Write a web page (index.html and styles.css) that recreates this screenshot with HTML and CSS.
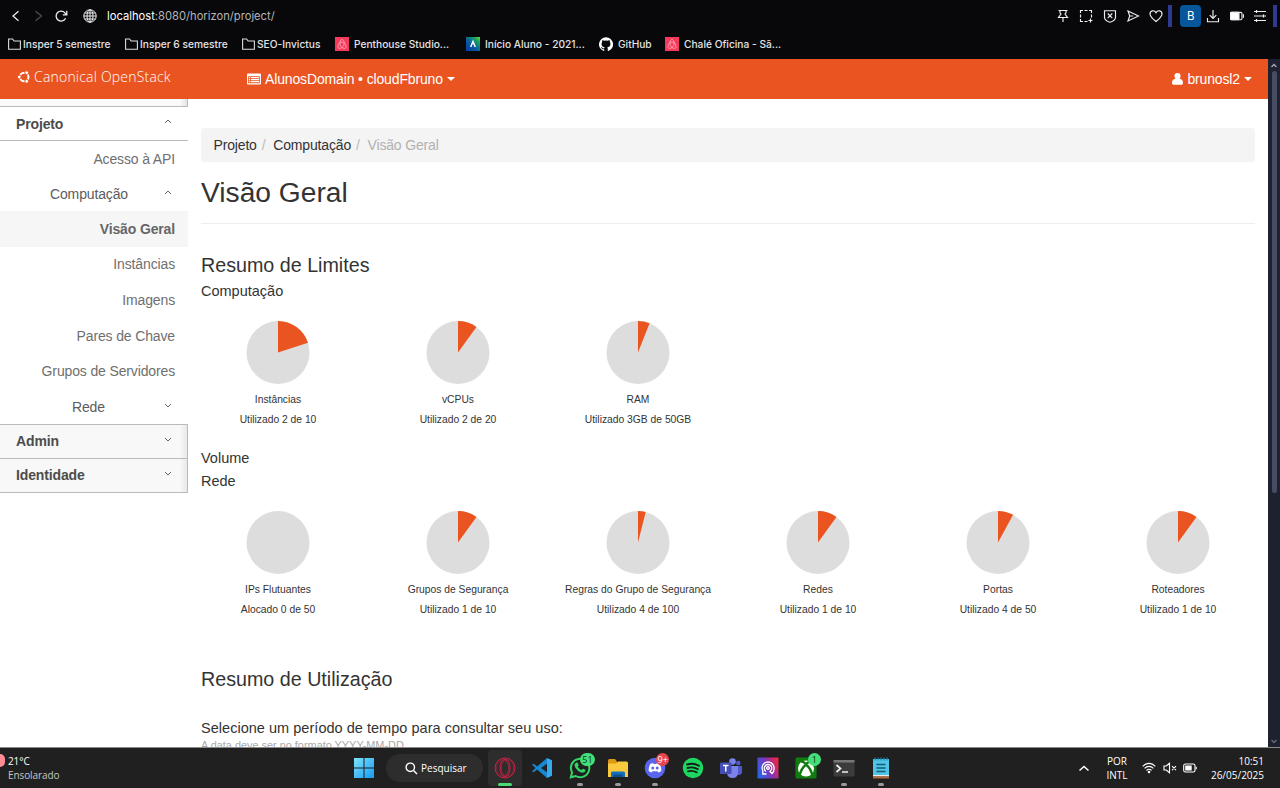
FILE: index.html
```html
<!DOCTYPE html>
<html lang="pt-BR">
<head>
<meta charset="utf-8">
<title>Visão Geral - Canonical OpenStack</title>
<link rel="stylesheet" href="styles.css">
</head>
<body>
<div class="screen">
  <header class="browser">
    <div class="toolbar">
      <svg class="nav-icon" viewBox="0 0 14 14"><path d="M9.500 2.200 4 7l5.500 4.800"/></svg>
      <svg class="nav-icon dim" viewBox="0 0 14 14"><path d="M4.500 2.200 10.500 7l-6 4.800"/></svg>
      <svg class="nav-icon reload" viewBox="0 0 14 14"><path d="M11.600 9.300A5 5 0 1 1 11.200 4.200L12.600 5.500M12.800 1.800v4H8.800"/></svg>
      <svg class="nav-icon globe" viewBox="0 0 14 14"><circle cx="7" cy="7" r="6.200"/><ellipse cx="7" cy="7" rx="3" ry="6.200"/><path d="M7 .8v12.400M.8 7h12.400M1.600 4h10.800M1.600 10h10.800"/></svg>
      <span class="url">localhost<span>:8080/horizon/project/</span></span>
      <div class="tools">
        <svg viewBox="0 0 14 14"><path d="M2.500 1.500h9M4 1.500v2.300L5 5 2.500 8.500h9L9 5l1-1.200V1.500M7 8.500V13"/></svg>
        <svg viewBox="0 0 14 14"><path d="M1.500 4V1.500H4M5.500 1.500h3M10 1.500h2.500V4M12.500 5.500v3M1.500 5.500v3M1.500 10v2.500H4M5.500 12.500h3M11.500 9.500v4M9.500 11.500h4"/></svg>
        <svg viewBox="0 0 14 14"><path d="M1.500 1.700h11v6.500c0 2.500-3 4.300-5.500 5-2.500-.7-5.500-2.500-5.500-5zM4.700 4.500l4.600 4.600M9.300 4.500 4.700 9.100"/></svg>
        <svg viewBox="0 0 14 14"><path d="M2 2l10.500 5L2 12l1.700-5zM3.700 7h3.500"/></svg>
        <svg viewBox="0 0 14 14"><path d="M7 12.500C4 10 1 7.700 1 4.900 1 1.400 5.400.7 7 3.700c1.600-3 6-2.300 6 1.200 0 2.800-3 5.100-6 7.600z"/></svg>
        <i class="mark"></i>
        <b class="profile">B</b>
        <svg viewBox="0 0 14 14"><path d="M7 1v8M3.700 6.200 7 9.500l3.300-3.300M1.500 9v3.700h11V9"/></svg>
        <svg viewBox="0 0 14 14"><rect x=".5" y="3.300" width="11.500" height="7.400" rx="1.500"/><rect x=".5" y="3.300" width="8.500" height="7.400" rx="1" fill="#fff"/><path d="M13.500 5.300v3.400"/></svg>
        <svg viewBox="0 0 14 14"><path d="M1 2.500h12M1 7h12M1 11.500h12M3.500 1v3M10.500 5.500v3M3.500 10v3"/></svg>
        <i class="mark end"></i>
      </div>
    </div>
    <nav class="bookmarks">
      <span class="bm f1"><svg class="folder" viewBox="0 0 13 12"><path d="M.6 1h4l1.500 2h6.300v8.200H.6z"/></svg><span>Insper 5 semestre</span></span>
      <span class="bm f2"><svg class="folder" viewBox="0 0 13 12"><path d="M.6 1h4l1.500 2h6.300v8.200H.6z"/></svg><span>Insper 6 semestre</span></span>
      <span class="bm f3"><svg class="folder" viewBox="0 0 13 12"><path d="M.6 1h4l1.500 2h6.300v8.200H.6z"/></svg><span>SEO-Invictus</span></span>
      <span class="bm s1"><svg class="site" viewBox="0 0 14 14"><path fill="#f53b5d" d="M0 0h14v14H0z"/><path class="bnb" d="M7 10.500C5.500 9 5 8 5 7a2 2 0 0 1 4 0c0 1-.5 2-2 3.500-1.300 1.200-4.300 1.500-4.100-1C3 8.700 5.200 4 6 2.900c.5-.7 1.500-.7 2 0C8.800 4 11 8.700 11.100 9.500c.2 2.500-2.800 2.200-4.100 1z"/></svg><span>Penthouse Studio...</span></span>
      <span class="bm s2"><svg class="site" viewBox="0 0 14 14"><defs><linearGradient id="ins" x1="1" y1="0" x2="0" y2="1"><stop offset="0" stop-color="#66dd33"/><stop offset=".25" stop-color="#159e65"/><stop offset=".6" stop-color="#0756a4"/><stop offset="1" stop-color="#083da0"/></linearGradient></defs><path fill="url(#ins)" d="M0 0h14v14H0z"/><path d="M4.700 10 7 4.500 9.300 10" fill="none" stroke="#fff" stroke-width="1.500"/></svg><span>Início Aluno - 2021...</span></span>
      <span class="bm s3"><svg class="site" viewBox="0 0 16 16"><path fill="#fff" d="M8 .3a8 8 0 0 0-2.500 15.600c.4.100.5-.2.500-.4v-1.500c-2.200.5-2.700-.9-2.700-.9-.4-.9-.9-1.200-.9-1.200-.7-.5.100-.5.100-.5.800.1 1.200.8 1.200.8.700 1.200 1.900.9 2.300.7.100-.5.300-.9.500-1.100-1.800-.2-3.600-.9-3.600-4 0-.9.300-1.600.8-2.100-.1-.2-.4-1 .1-2.100 0 0 .7-.2 2.200.8a7.500 7.500 0 0 1 4 0c1.500-1 2.200-.8 2.200-.8.400 1.100.2 1.900.1 2.100.5.600.8 1.300.8 2.100 0 3.100-1.900 3.800-3.700 4 .3.200.6.700.6 1.500v2.200c0 .2.100.5.600.4A8 8 0 0 0 8 .3z"/></svg><span>GitHub</span></span>
      <span class="bm s4"><svg class="site" viewBox="0 0 14 14"><path fill="#f53b5d" d="M0 0h14v14H0z"/><path class="bnb" d="M7 10.500C5.500 9 5 8 5 7a2 2 0 0 1 4 0c0 1-.5 2-2 3.500-1.300 1.200-4.300 1.500-4.100-1C3 8.700 5.200 4 6 2.900c.5-.7 1.500-.7 2 0C8.800 4 11 8.700 11.100 9.500c.2 2.500-2.800 2.200-4.100 1z"/></svg><span>Chalé Oficina - Sã...</span></span>
    </nav>
  </header>

  <div class="viewport">
    <div class="page">
      <div class="topbar">
        <a class="brand"><svg viewBox="0 0 14 14"><circle cx="7.200" cy="7" r="4.300" fill="none" stroke="#fff" stroke-width="2"/><g fill="#fff" stroke="#e95420" stroke-width="1"><circle cx="2.300" cy="7" r="1.900"/><circle cx="9.700" cy="2.700" r="1.900"/><circle cx="9.700" cy="11.300" r="1.900"/></g></svg><span>Canonical OpenStack</span></a>
        <a class="context"><svg viewBox="0 0 14 12"><path fill="#fff" fill-rule="evenodd" d="M1 .5h12q1 0 1 1v9q0 1-1 1H1q-1 0-1-1v-9q0-1 1-1zM1.200 3.200v7h11.600v-7z"/><path d="M2 4.700h1.300M4 4.700h8M2 6.700h1.300M4 6.700h8M2 8.700h1.300M4 8.700h8" stroke="#fff" stroke-width="1.300"/></svg><span>AlunosDomain • cloudFbruno</span><i class="caret"></i></a>
        <a class="user"><svg viewBox="0 0 11 12"><path fill="#fff" d="M5.500 0a3 3 0 0 1 3 3.300c0 1-.4 1.900-1 2.500 2.300.2 3.500 1.700 3.500 4.200 0 1-.7 1.800-1.800 1.800H1.800C.7 11.800 0 11 0 10c0-2.500 1.200-4 3.500-4.200a3.500 3.500 0 0 1-1-2.500A3 3 0 0 1 5.500 0z"/></svg><span>brunosl2</span><i class="caret"></i></a>
      </div>
      <div class="columns">
        <aside class="sidebar">
          <div class="strip"></div>
          <div class="panel open"><span>Projeto</span><svg class="chev" viewBox="0 0 8 5"><path d="M1 4l3-3 3 3"/></svg></div>
          <a class="item api">Acesso à API</a>
          <div class="group"><span>Computação</span><svg class="chev" viewBox="0 0 8 5"><path d="M1 4l3-3 3 3"/></svg></div>
          <a class="item active">Visão Geral</a>
          <a class="item">Instâncias</a>
          <a class="item">Imagens</a>
          <a class="item">Pares de Chave</a>
          <a class="item">Grupos de Servidores</a>
          <div class="group net"><span>Rede</span><svg class="chev" viewBox="0 0 8 5"><path d="M1 1l3 3 3-3"/></svg></div>
          <div class="panel shaded"><span>Admin</span><svg class="chev" viewBox="0 0 8 5"><path d="M1 1l3 3 3-3"/></svg></div>
          <div class="panel shaded"><span>Identidade</span><svg class="chev" viewBox="0 0 8 5"><path d="M1 1l3 3 3-3"/></svg></div>
        </aside>
        <main class="content">
          <ol class="breadcrumb"><li>Projeto</li><li class="sep">/</li><li>Computação</li><li class="sep">/</li><li class="current">Visão Geral</li></ol>
          <h1>Visão Geral</h1>
          <h3>Resumo de Limites</h3>
          <h4>Computação</h4>
          <div class="charts">
            <figure><svg class="pie" viewBox="0 0 64 64"><circle class="disc" cx="32" cy="31.500" r="31.500"/><circle class="used" cx="32" cy="31.500" r="15.750" pathLength="100" stroke-dasharray="20 80"/></svg><p>Instâncias</p><p>Utilizado 2 de 10</p></figure>
            <figure><svg class="pie" viewBox="0 0 64 64"><circle class="disc" cx="32" cy="31.500" r="31.500"/><circle class="used" cx="32" cy="31.500" r="15.750" pathLength="100" stroke-dasharray="10 90"/></svg><p>vCPUs</p><p>Utilizado 2 de 20</p></figure>
            <figure><svg class="pie" viewBox="0 0 64 64"><circle class="disc" cx="32" cy="31.500" r="31.500"/><circle class="used" cx="32" cy="31.500" r="15.750" pathLength="100" stroke-dasharray="6 94"/></svg><p>RAM</p><p>Utilizado 3GB de 50GB</p></figure>
          </div>
          <h4 class="volume">Volume</h4>
          <h4 class="network">Rede</h4>
          <div class="charts lower">
            <figure><svg class="pie" viewBox="0 0 64 64"><circle class="disc" cx="32" cy="31.500" r="31.500"/></svg><p>IPs Flutuantes</p><p>Alocado 0 de 50</p></figure>
            <figure><svg class="pie" viewBox="0 0 64 64"><circle class="disc" cx="32" cy="31.500" r="31.500"/><circle class="used" cx="32" cy="31.500" r="15.750" pathLength="100" stroke-dasharray="10 90"/></svg><p>Grupos de Segurança</p><p>Utilizado 1 de 10</p></figure>
            <figure><svg class="pie" viewBox="0 0 64 64"><circle class="disc" cx="32" cy="31.500" r="31.500"/><circle class="used" cx="32" cy="31.500" r="15.750" pathLength="100" stroke-dasharray="4 96"/></svg><p>Regras do Grupo de Segurança</p><p>Utilizado 4 de 100</p></figure>
            <figure><svg class="pie" viewBox="0 0 64 64"><circle class="disc" cx="32" cy="31.500" r="31.500"/><circle class="used" cx="32" cy="31.500" r="15.750" pathLength="100" stroke-dasharray="10 90"/></svg><p>Redes</p><p>Utilizado 1 de 10</p></figure>
            <figure><svg class="pie" viewBox="0 0 64 64"><circle class="disc" cx="32" cy="31.500" r="31.500"/><circle class="used" cx="32" cy="31.500" r="15.750" pathLength="100" stroke-dasharray="8 92"/></svg><p>Portas</p><p>Utilizado 4 de 50</p></figure>
            <figure><svg class="pie" viewBox="0 0 64 64"><circle class="disc" cx="32" cy="31.500" r="31.500"/><circle class="used" cx="32" cy="31.500" r="15.750" pathLength="100" stroke-dasharray="10 90"/></svg><p>Roteadores</p><p>Utilizado 1 de 10</p></figure>
          </div>
          <h3 class="usage">Resumo de Utilização</h3>
          <h4 class="period">Selecione um período de tempo para consultar seu uso:</h4>
          <p class="hint">A data deve ser no formato YYYY-MM-DD</p>
        </main>
      </div>
    </div>
    <div class="scrollbar"><svg viewBox="0 0 8 5"><path d="M1.500 4 4 1.500 6.500 4"/></svg><div class="thumb"></div><svg class="down" viewBox="0 0 8 5"><path d="M1.500 1 4 3.500 6.500 1"/></svg></div>
  </div>

  <footer class="taskbar">
    <div class="weather"><i></i><div><div>21°C</div><div class="sky">Ensolarado</div></div></div>
    <svg class="start" viewBox="0 0 20 20"><defs><linearGradient id="win" x1="0" y1="0" x2="1" y2="1"><stop offset="0" stop-color="#7fe3fb"/><stop offset="1" stop-color="#149bf2"/></linearGradient></defs><path fill="url(#win)" d="M0 0h9.500v9.500H0zM10.500 0H20v9.500h-9.500zM0 10.500h9.500V20H0zM10.500 10.500H20V20h-9.500z"/></svg>
    <div class="search"><svg viewBox="0 0 13 13"><circle cx="5.300" cy="5.300" r="4.200"/><path d="M8.500 8.500 12 12"/></svg><span>Pesquisar</span></div>
    <div class="apps">
      <div class="app tile"><svg viewBox="0 0 22 22"><g fill="none" stroke="#d32148" stroke-width="1"><circle cx="11" cy="11" r="10"/><circle cx="11" cy="11" r="8.600" stroke-width=".5"/><ellipse cx="11" cy="11" rx="5" ry="8.500"/><ellipse cx="11" cy="11" rx="3.600" ry="7.300" stroke-width=".6"/></g></svg></div>
      <div class="app"><svg viewBox="0 0 22 22"><path fill="#1688d2" d="M16 1 6.200 9.500 2.500 6.700 1 7.500l3.500 3.500L1 14.500l1.500.8 3.700-2.800L16 21z"/><path fill="#35a9ef" d="m16 1 5 2.300v15.400L16 21z"/><path fill="#202020" d="m16 6.700-6 4.300 6 4.300z"/></svg></div>
      <div class="app run"><svg viewBox="0 0 22 22"><path fill="#202020" stroke="#35d467" stroke-width="2" d="m1.800 20.300 1.300-4.800A9.200 9.200 0 1 1 6.600 19z"/><path fill="#35d467" d="M7 5.700c.8-.5 1.500-.4 1.900.6l.7 1.600c.2.600-1 1.500-.8 1.800.8 1.500 2 2.600 3.600 3.200.5.200 1.200-1.500 1.800-1.200l2 1c.8.500-.2 2.400-1.500 2.800C10.500 16.500 5.500 11 5.600 8c0-.9.700-1.900 1.400-2.300z"/></svg><b class="badge green wa">51</b></div>
      <div class="app run"><svg viewBox="0 0 22 22"><path fill="#d99a18" d="M1 3.500q0-1.500 1.500-1.500H8l2 2.500v3H1z"/><path fill="#fbc93d" d="M1 6.500h8l2-2h8.500Q21 4.500 21 6v14H1z"/><path fill="#126fba" d="M4 20v-4q0-1.500 1.500-1.500h11Q18 14.500 18 16v4z"/><path fill="#0b4f92" d="M6.500 17.500h9V20h-9z"/></svg></div>
      <div class="app run"><svg viewBox="0 0 22 22"><circle cx="11" cy="11" r="10.300" fill="#5965ef"/><path fill="#fff" fill-rule="evenodd" d="M6.500 6.700 9 6l.6 1h2.800l.6-1 2.500.7c1.300 2 2 4.600 1.800 7.300-1 .8-2 1.200-3 1.400l-.7-1.200H8.400l-.7 1.200c-1-.2-2-.6-3-1.400-.2-2.700.5-5.300 1.800-7.300zM8.800 9.500a1.500 1.500 0 1 0 0 3 1.500 1.500 0 0 0 0-3zm4.400 0a1.500 1.500 0 1 0 0 3 1.500 1.500 0 0 0 0-3z"/></svg><b class="badge red">9+</b></div>
      <div class="app"><svg viewBox="0 0 22 22"><circle cx="11" cy="11" r="10.200" fill="#1ed760"/><path fill="none" stroke="#14201a" stroke-linecap="round" stroke-width="1.900" d="M5 7.500c4-1.200 8.500-.8 12 1.200M5.500 11c3.500-1 7.300-.6 10.300 1.100M6 14.300c3-.8 6-.4 8.700 1"/></svg></div>
      <div class="app"><svg viewBox="0 0 22 22"><circle cx="18.300" cy="6" r="2.300" fill="#5059c9"/><path fill="#5059c9" d="M14 9h8v6q0 3-3.500 3H14z"/><circle cx="12.500" cy="4.500" r="3.300" fill="#7b83eb"/><path fill="#7b83eb" d="M7 9h11v6q0 6-5.500 6T7 15z"/><rect y="5.500" width="11.500" height="11.500" rx="1" fill="#464eb8"/><path stroke="#fff" stroke-width="1.500" d="M3 8.500h5.500M5.750 8.500v6"/></svg></div>
      <div class="app"><svg viewBox="0 0 22 22"><defs><linearGradient id="id" x1="0" x2="1" y1=".7" y2=".3"><stop offset="0" stop-color="#2864e8"/><stop offset=".5" stop-color="#7c36bd"/><stop offset="1" stop-color="#f02446"/></linearGradient></defs><path fill="url(#id)" d="M.5.500h21v21H.5z"/><path fill="none" stroke="#fff" stroke-width="1.300" d="M9.500 17H5.800v-3.500C3.800 9.500 6.500 5 11 5c6 0 8 7.500 4 11.500L12.500 14M9 14.500c-3-2.500-1.500-7 2-7s5.200 4 2.300 6.500M11 10v2.500"/><circle cx="11" cy="11" r="1.600" fill="none" stroke="#fff" stroke-width="1"/></svg></div>
      <div class="app"><svg viewBox="0 0 22 22"><rect x=".5" y=".5" width="21" height="21" rx="1.500" fill="#107c10"/><circle cx="11" cy="11.500" r="8" fill="#fff"/><path fill="none" stroke="#107c10" stroke-width="2.400" d="M4.500 19C5.500 14 8 10 11 7.500c3 2.500 5.500 6.500 6.500 11.500M6 4.500c2 0 3.500 1 5 2.500 1.500-1.500 3-2.500 5-2.500"/></svg><b class="badge green">1</b></div>
      <div class="app run"><svg viewBox="0 0 22 22"><rect x=".5" y="3" width="21" height="16.500" rx="1" fill="#3c3c3c"/><path fill="#777" d="M.5 3h21v2.500H.5z"/><path fill="none" stroke="#eee" stroke-width="1.700" d="m3.500 8 4 3.500-4 3.500M9 15h6"/></svg></div>
      <div class="app run"><svg viewBox="0 0 22 22"><path fill="#50c5e5" d="M3 2h16v16H3z"/><path fill="#e4eef2" d="M3 18h16v1.500H3z"/><path fill="#b56934" d="M3 19.500h16v2H3z"/><path stroke="#125b79" stroke-width="1.500" d="M6.500 7.500h9M6.500 11h9M6.500 14.500h9"/><path stroke="#1684a9" stroke-width="1.200" d="M5 .5v3M8 .5v3M11 .5v3M14 .5v3M17 .5v3"/></svg></div>
    </div>
    <div class="tray">
      <svg class="up" viewBox="0 0 12 8"><path d="m1.500 6.500 4.500-4 4.500 4"/></svg>
      <div class="lang">POR<br>INTL</div>
      <svg class="wifi" viewBox="0 0 14 12"><path d="M.7 4.300c3.600-3.900 9-3.900 12.600 0M2.600 6.400c2.600-2.700 6.200-2.700 8.800 0M4.500 8.500c1.500-1.600 3.500-1.600 5 0"/><circle cx="7" cy="10" r="1.300" fill="#fff" stroke="none"/></svg>
      <svg class="mute" viewBox="0 0 14 12"><path d="M1 4h2.300L6.500 1.300v9.400L3.300 8H1zM9 4.200l4 4M13 4.200l-4 4"/></svg>
      <svg class="power" viewBox="0 0 14 12"><rect x=".7" y="2" width="11.300" height="8" rx="1.800"/><path fill="#fff" stroke="none" d="M2.200 3.500h6.500v5H2.200z"/><path d="M13.200 4.800v2.400"/></svg>
      <div class="clock">10:51<br>26/05/2025</div>
    </div>
  </footer>
</div>
</body>
</html>
```
FILE: styles.css
```css
* { box-sizing: border-box; }
body { margin: 0; font-family: "Liberation Sans", Arial, sans-serif; color: #333; }
svg { display: block; flex: none; }
.screen { width: 1280px; height: 788px; display: flex; flex-direction: column; overflow: hidden; background: #fff; }

.browser { height: 59px; flex: none; background: #08080b; color: #e4e4e6; font-family: Inter, sans-serif; }
.toolbar { height: 32px; display: flex; align-items: center; padding-left: 9px; }
.nav-icon { width: 14px; height: 14px; fill: none; stroke: #eee; stroke-width: 1.3; margin-right: 8px; }
.nav-icon.dim { stroke: #4b4b4f; }
.nav-icon.reload { margin: 0 15px 0 1px; }
.nav-icon.globe { stroke-width: 1; margin-right: 10px; }
.url { font-size: 11.2px; color: #fff; white-space: nowrap; }
.url span { color: #b4b4b9; }
.tools { margin-left: auto; display: flex; align-items: center; height: 32px; gap: 9.2px; padding-right: 3px; }
.tools svg { width: 14px; height: 14px; fill: none; stroke: #eee; stroke-width: 1.15; }
.mark { width: 4px; height: 22px; background: #303a90; margin: 0 -1px 0 -4px; }
.mark.end { margin: 0 0 0 -3px; }
.profile { width: 21px; height: 22px; border-radius: 4px; background: #07559b; color: #fff; font-weight: 400; font-size: 11.5px; line-height: 22px; text-align: center; margin-right: -4px; }
.bookmarks { height: 24px; display: flex; align-items: center; font-size: 10.2px; font-weight: 500; padding-left: 8px; }
.bm { display: flex; align-items: center; white-space: nowrap; }
.folder { width: 13px; height: 12px; fill: none; stroke: #ddd; stroke-width: 1.1; margin-right: 2px; }
.site { width: 14px; height: 14px; margin-right: 5px; }
.bnb { fill: none; stroke: #ffc0cb; stroke-width: .7; }
.f1, .f2 { width: 117px; }
.f3 { width: 93px; }
.s1 { width: 131px; }
.s2 { width: 133px; }
.s3 { width: 66px; }

.viewport { height: 689px; flex: none; display: flex; overflow: hidden; border-bottom: 1px solid #8b8b8b; }
.page { width: 1268px; overflow: hidden; }
.topbar { height: 40px; background: #e95420; color: #fff; display: flex; align-items: center; padding: 0 16px 0 17px; font-size: 14px; letter-spacing: -.14px; }
.brand { width: 230px; display: flex; align-items: center; font: 300 14px "Open Sans", sans-serif; letter-spacing: .2px; margin-top: -5px; }
.brand svg { width: 14px; height: 14px; margin-right: 3px; }
.context, .user { display: flex; align-items: center; white-space: nowrap; }
.context svg { width: 14px; height: 12px; margin-right: 4px; }
.user { margin-left: auto; }
.user svg { width: 11px; height: 12px; margin-right: 4px; }
.caret { border: 4.5px solid transparent; border-top-color: #fff; border-bottom: 0; margin-left: 4px; }

.columns { display: flex; }
.sidebar { width: 188px; flex: none; font-size: 14px; letter-spacing: -.14px; color: #6f6f6f; }
.strip { height: 8px; background: linear-gradient(90deg, #fafafa 96%, #e4e4e4); border-bottom: 1px solid #bbb; border-right: 1px solid #bbb; }
.panel { height: 34px; border-bottom: 1px solid #bbb; display: flex; align-items: center; justify-content: space-between; padding: 0 16px; font-weight: 700; color: #4c4c4c; }
.shaded { background: linear-gradient(90deg, #f8f8f8 96%, #e9e9e9); border-right: 1px solid #bbb; padding-right: 15px; }
.chev { width: 8px; height: 5px; fill: none; stroke: #555; stroke-width: .9; margin-top: -4px; }
.item { display: block; height: 35.8px; line-height: 35.8px; text-align: right; padding-right: 13px; white-space: nowrap; }
.item.api { height: 36px; line-height: 37px; }
.item.active { background: #f6f6f6; font-weight: 700; color: #666; height: 36px; line-height: 37px; }
.group { height: 34px; display: flex; align-items: center; justify-content: space-between; padding: 0 16px 0 50px; color: #5c5c5c; }
.net { height: 34.8px; padding-left: 72px; border-bottom: 1px solid #bbb; }

.content { flex: 1; padding: 29px 13px 0; }
.breadcrumb { list-style: none; margin: 0; height: 34px; display: flex; align-items: center; padding: 0 12.500px; background: #f4f4f4; border-radius: 3px; font-size: 14px; letter-spacing: -.16px; }
.sep { color: #bbb; width: 16.5px; padding-left: 5px; }
.current { color: #b1b1b1; }
h1, h3, h4, p, figure { margin: 0; font-weight: 400; white-space: nowrap; }
h1 { font-size: 28.2px; line-height: 36px; margin-top: 12px; padding-bottom: 13px; border-bottom: 1px solid #eee; }
h3 { font-size: 19.700px; line-height: 24px; margin-top: 29px; }
h4 { font-size: 14.5px; line-height: 20px; margin-top: 4px; }
.charts { display: grid; grid-template-columns: repeat(6, 180px); margin: 19px -13px 0; padding-top: .5px; font-size: 10.300px; line-height: 20px; text-align: center; }
.pie { width: 64px; height: 64px; margin: 0 auto 5.500px; }
.lower { padding-top: 1px; }
.lower .pie { margin-bottom: 5px; }
.disc { fill: #ddd; }
.used { fill: none; stroke: #e95420; stroke-width: 31.5; transform: rotate(-90deg); transform-origin: 32px 31.5px; }
.volume { margin-top: 18px; }
.network { margin-top: 3px; }
.usage { margin-top: 47px; }
.period { margin-top: 27px; letter-spacing: .03px; }
.hint { font-size: 10.9px; line-height: 15px; color: #aaa; }
.scrollbar { width: 12px; background: #1e2130; display: flex; flex-direction: column; align-items: center; padding: 4px 0 3px; }
.scrollbar svg { width: 8px; height: 5px; fill: none; stroke: #aaaab4; stroke-width: 1.3; }
.scrollbar .down { margin-top: auto; stroke: #666a78; }
.thumb { width: 5px; height: 422px; border-radius: 3px; background: #484c62; margin-top: 3px; }

.taskbar { height: 40px; background: #202020; color: #fff; display: flex; align-items: center; font: 10px/14px "Open Sans", "Noto Sans", sans-serif; }
.weather { width: 354px; display: flex; align-items: center; letter-spacing: -.1px; }
.weather i { width: 5px; height: 13px; border-radius: 0 7px 7px 0; background: #ff8c94; margin: -15px 3px 0 0; }
.sky { color: #c6c6c6; }
.start { width: 20px; height: 20px; margin-right: 12px; }
.search { width: 97px; height: 28px; border-radius: 14px; background: #2d2d2d; display: flex; align-items: center; padding-left: 19px; margin-right: 3px; }
.search svg { width: 13px; height: 13px; fill: none; stroke: #fff; stroke-width: 1.4; margin-right: 3px; }
.apps { display: grid; grid-template-columns: repeat(11, 37.650px); }
.app { position: relative; height: 36px; display: flex; align-items: center; justify-content: center; }
.app svg { width: 22px; height: 22px; }
.tile { background: #2d2d2d; border-radius: 4px; margin: 0 1.500px; }
.run::after, .tile::after { content: ""; position: absolute; left: calc(50% - 3px); bottom: 0; width: 6px; height: 3px; border-radius: 2px; background: #999; }
.tile::after { left: calc(50% - 7px); width: 14px; background: #4cdb73; }
.badge { position: absolute; right: 4px; top: 3px; min-width: 13px; height: 13px; border-radius: 7px; font-size: 9px; line-height: 13px; text-align: center; font-weight: 400; }
.wa { right: 4px; min-width: 15px; }
.green { background: #42e078; color: #10351c; }
.red { background: #e8444b; right: 5px; }
.tray { margin-left: auto; display: flex; align-items: center; padding-right: 16px; }
.tray svg { width: 14px; height: 12px; fill: none; stroke: #fff; stroke-width: 1.1; }
.tray .up { width: 12px; height: 8px; stroke-width: 1.5; margin-right: 16px; }
.lang { width: 22px; text-align: center; margin-right: 14px; }
.wifi, .mute { margin-right: 6.500px; }
.power { margin-right: 12px; }
.clock { width: 55px; text-align: right; }
```
